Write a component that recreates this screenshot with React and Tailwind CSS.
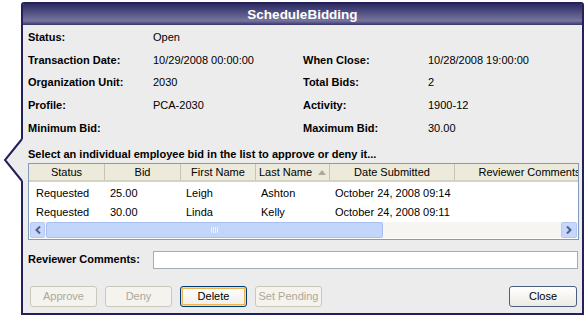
const cols = [
  { label: "Status", w: "w-[76px]", pl: "pl-[7px]" },
  { label: "Bid", w: "w-[76px]", pl: "pl-[5px]" },
  { label: "First Name", w: "w-[75px]", pl: "pl-[5px]" },
  { label: "Last Name", w: "w-[74px]", pl: "pl-[5px]", sort: true },
  { label: "Date Submitted", w: "w-[125px]", pl: "pl-[5px]" },
  { label: "Reviewer Comments", w: "w-[150px]", pl: "pl-[5px]" },
];

const bids = [
  ["Requested", "25.00", "Leigh", "Ashton", "October 24, 2008 09:14", ""],
  ["Requested", "30.00", "Linda", "Kelly", "October 24, 2008 09:11", ""],
];

function Field({ label, value }) {
  return (
    <>
      <div className="font-bold">{label}</div>
      <div>{value}</div>
    </>
  );
}

function ListView() {
  return (
    <div className="ml-[5px] mr-[3px] h-[77px] border border-[#7f9db9] bg-white flex flex-col overflow-hidden">
      <div className="flex h-[18px] shrink-0 bg-[#ebeadb] border-b-2 border-[#d6d2c2]">
        {cols.map((c) => (
          <div
            key={c.label}
            className={`${c.w} shrink-0 flex items-center justify-center gap-[6px] pt-[2px] border-r border-[#c7c5b2] whitespace-nowrap`}
          >
            <span>{c.label}</span>
            {c.sort && (
              <svg width="8" height="5" viewBox="0 0 8 5">
                <path d="M0 5 L4 0 L8 5 Z" fill="#aca899" />
              </svg>
            )}
          </div>
        ))}
      </div>
      <div className="pt-[2px]">
        {bids.map((row, i) => (
          <div key={i} className="flex h-[19px] items-center">
            {row.map((cell, j) => (
              <div
                key={j}
                className={`${cols[j].w} ${cols[j].pl} shrink-0 overflow-hidden whitespace-nowrap pr-[4px]`}
              >
                {cell}
              </div>
            ))}
          </div>
        ))}
      </div>
      <div className="mt-auto mb-[1px] h-[16px] flex items-stretch bg-[#f6f5f1] px-[1px]">
        <div className="w-[15px] flex items-center justify-center rounded-[2px] border border-[#b7c9f2] bg-[#c6d6fc]">
          <svg width="6" height="8" viewBox="0 0 6 8">
            <path d="M5 0.5 L1.5 4 L5 7.5" stroke="#4d6185" strokeWidth="2" fill="none" />
          </svg>
        </div>
        <div className="ml-[1px] w-[337px] flex items-center justify-center rounded-[2px] border border-[#a9bff0] bg-[#c4d5fb]">
          <div className="flex gap-[1px]">
            <div className="w-[1px] h-[6px] bg-[#eef3fe]" />
            <div className="w-[1px] h-[6px] bg-[#eef3fe]" />
            <div className="w-[1px] h-[6px] bg-[#eef3fe]" />
            <div className="w-[1px] h-[6px] bg-[#eef3fe]" />
          </div>
        </div>
        <div className="flex-1" />
        <div className="w-[16px] flex items-center justify-center rounded-[2px] border border-[#b7c9f2] bg-[#c6d6fc]">
          <svg width="6" height="8" viewBox="0 0 6 8">
            <path d="M1 0.5 L4.5 4 L1 7.5" stroke="#4d6185" strokeWidth="2" fill="none" />
          </svg>
        </div>
      </div>
    </div>
  );
}

function Button({ children, kind }) {
  const styles = {
    disabled:
      "border-[#cac8bb] bg-[#f4f3ee] text-[#aca899]",
    focus:
      "border-[#003c74] bg-linear-to-b from-[#fefefe] to-[#f0efe7] shadow-[inset_0_0_0_1px_#fbd98e,inset_0_0_0_2px_#eeb552]",
    normal:
      "border-[#4a5f83] bg-linear-to-b from-[#ffffff] to-[#edebe3]",
  };
  return (
    <div
      className={`h-[21px] flex items-center justify-center rounded-[3px] border ${styles[kind]}`}
    >
      {children}
    </div>
  );
}

export default function App() {
  return (
    <div className="relative w-[584px] h-[318px] bg-white pt-[2px] pl-[21px] text-[11px] leading-[13px] text-black font-['Liberation_Sans',Arial,sans-serif]">
      <div className="w-[563px] h-[313px] flex flex-col overflow-hidden rounded-t-[3px] border-2 border-[#24215a] bg-[#ececec]">
        <div className="h-[21px] shrink-0 flex items-center justify-center bg-linear-to-b from-[#2e2b64] via-[#77759c] via-80% to-[#37346c] text-white font-bold text-[13.5px]">
          ScheduleBidding
        </div>

        <div className="grid grid-cols-[125px_150px_125px_1fr] auto-rows-[22.75px] items-center px-[5px] pt-[1px]">
          <Field label="Status:" value="Open" />
          <div />
          <div />
          <Field label="Transaction Date:" value="10/29/2008 00:00:00" />
          <Field label="When Close:" value="10/28/2008 19:00:00" />
          <Field label="Organization Unit:" value="2030" />
          <Field label="Total Bids:" value="2" />
          <Field label="Profile:" value="PCA-2030" />
          <Field label="Activity:" value="1900-12" />
          <Field label="Minimum Bid:" value="" />
          <Field label="Maximum Bid:" value="30.00" />
        </div>

        <div className="px-[5px] pt-[7px] pb-[2px] leading-[14px] font-bold">
          Select an individual employee bid in the list to approve or deny it...
        </div>

        <ListView />

        <div className="mt-[11px] h-[18px] flex items-center pl-[5px] pr-[4px]">
          <div className="w-[125px] font-bold">Reviewer Comments:</div>
          <div className="flex-1 h-[18px] bg-white border border-[#a5acb5]" />
        </div>

        <div className="mt-[17px] flex items-center pl-[7px] pr-[5px]">
          <div className="flex gap-[8px]">
            <div className="w-[67px]"><Button kind="disabled">Approve</Button></div>
            <div className="w-[67px]"><Button kind="disabled">Deny</Button></div>
            <div className="w-[67px]"><Button kind="focus">Delete</Button></div>
            <div className="w-[67px]"><Button kind="disabled">Set Pending</Button></div>
          </div>
          <div className="ml-auto w-[68px]"><Button kind="normal">Close</Button></div>
        </div>
      </div>

      <svg className="absolute left-0 top-[136px]" width="26" height="48" viewBox="0 0 26 48">
        <rect x="21" y="3" width="5" height="42" fill="#ececec" />
        <path d="M22 4 L5 24 L22 44 Z" fill="#ececec" />
        <polyline points="22,3 5,24 22,45" fill="none" stroke="#24215a" strokeWidth="2" />
      </svg>
    </div>
  );
}
